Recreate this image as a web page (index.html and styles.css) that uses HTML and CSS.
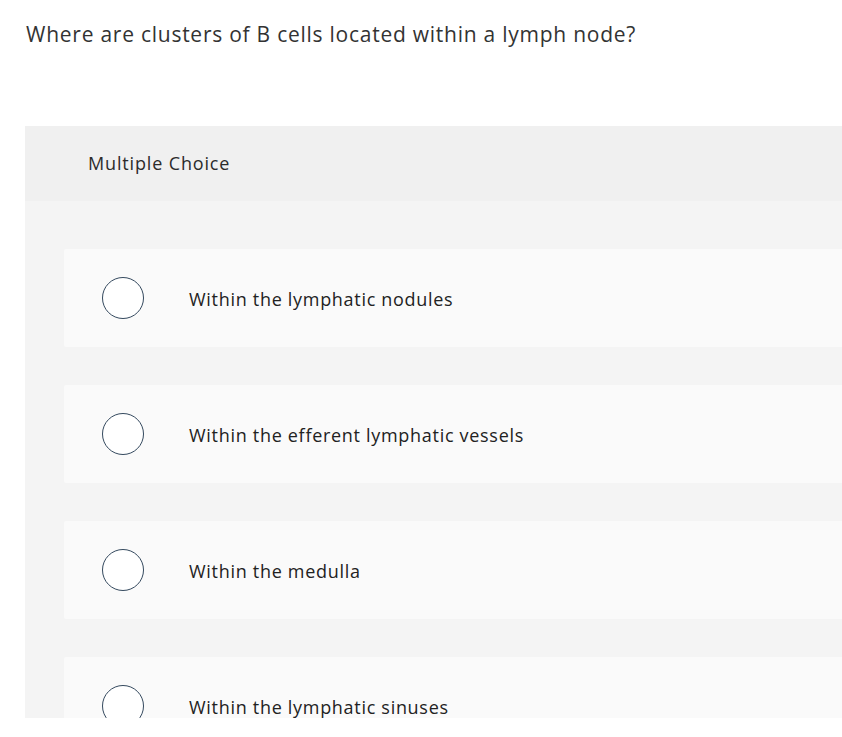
FILE: index.html
```html
<!DOCTYPE html>
<html>
<head>
<meta charset="utf-8">
<link rel="stylesheet" href="styles.css">
</head>
<body>
<div class="page">
  <p class="question">Where are clusters of B cells located within a lymph node?</p>
  <section class="mc">
    <header class="mc-head">Multiple Choice</header>
    <div class="mc-body">
      <label class="opt"><span class="radio"></span><span class="opt-text">Within the lymphatic nodules</span></label>
      <label class="opt"><span class="radio"></span><span class="opt-text">Within the efferent lymphatic vessels</span></label>
      <label class="opt"><span class="radio"></span><span class="opt-text">Within the medulla</span></label>
      <label class="opt"><span class="radio"></span><span class="opt-text">Within the lymphatic sinuses</span></label>
    </div>
  </section>
</div>
</body>
</html>
```

FILE: styles.css
```css
html, body {
  margin: 0;
  padding: 0;
  background: #ffffff;
}
body {
  font-family: "Open Sans", "Liberation Sans", sans-serif;
  color: #2b2b2b;
  overflow: hidden;
}
.page {
  width: 842px;
  height: 737px;
  overflow: hidden;
}
.question {
  margin: 0;
  padding: 20px 0 0 26px;
  font-size: 21px;
  line-height: 28px;
  letter-spacing: 0.75px;
  color: #333333;
}
.mc {
  margin: 78px 0 0 25px;
  height: 592px;
  overflow: hidden;
  background: #f4f4f4;
}
.mc-head {
  height: 74px;
  padding-bottom: 1px;
  background: #f0f0f0;
  display: flex;
  align-items: center;
  padding-left: 63px;
  font-size: 18px;
  letter-spacing: 0.85px;
  color: #2b2b2b;
}
.mc-body {
  padding: 48px 0 0 39px;
  display: flex;
  flex-direction: column;
  gap: 38px;
}
.opt {
  height: 98px;
  background: #fafafa;
  display: flex;
  align-items: center;
  padding-left: 38px;
  border-radius: 2px 0 0 2px;
}
.radio {
  width: 40px;
  height: 40px;
  border: 1px solid #34495e;
  border-radius: 50%;
  background: #ffffff;
  flex: none;
}
.opt-text {
  margin-left: 45px;
  padding-top: 1px;
  font-size: 18px;
  letter-spacing: 0.7px;
  color: #222222;
}
```
